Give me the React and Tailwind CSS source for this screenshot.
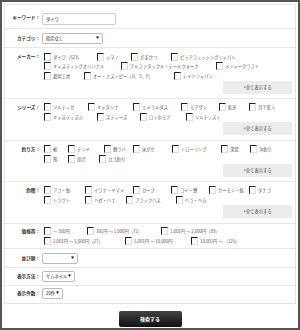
import React from "react";

const font = { fontFamily: '"Noto Sans CJK JP", "Noto Sans", sans-serif' };

const makerLines = [
  [["ダイワ（523）", "w-[53px]"], ["シマノ", "w-[34px]"], ["がまかつ", "w-[40px]"], ["ピュアフィッシングジャパン", ""]],
  [["キャスティングオリジナル", "w-[77px]"], ["アルファタックル・テールウォーク", "w-[95px]"], ["メジャークラフト", ""]],
  [["葛岡工房", "w-[40px]"], ["オー・エス・ピー（O．S．P）", "w-[90px]"], ["レイドジャパン", ""]],
];

const seriesLines = [
  [["ソルティガ", "w-[44px]"], ["キャタリナ", "w-[45px]"], ["エメラルダス", "w-[48px]"], ["モアザン", "w-[38px]"], ["紅牙", "w-[30px]"], ["月下美人", ""]],
  [["キャスティズム", "w-[53px]"], ["スティーズ", "w-[43px]"], ["ロッホモア", "w-[46px]"], ["ソルティスト", ""]],
];

const methodLines = [
  [["船", "w-[24px]"], ["テンヤ", "w-[36px]"], ["鯛ラバ", "w-[29px]"], ["泳がせ", "w-[39px]"], ["トローリング", "w-[49px]"], ["深場", "w-[29px]"], ["沖釣り", ""]],
  [["筏", "w-[24px]"], ["投げ", "w-[31px]"], ["カゴ釣り", ""]],
];

const fishLines = [
  [["アユ・鮎", "w-[41px]"], ["イワナ・ヤマメ", "w-[48px]"], ["カープ", "w-[38px]"], ["コイ・鯉", "w-[38px]"], ["サーモン・鮭", "w-[40px]"], ["タナゴ", ""]],
  [["トラウト", "w-[41px]"], ["ハゼ・ハエ", "w-[41px]"], ["ブラックバス", "w-[50px]"], ["ヘラ・へら", ""]],
];

const priceLines = [
  [["～ 300円", "w-[43px]"], ["301円 ～ 1,000円（72）", "w-[74px]"], ["1,001円 ～ 2,000円（89）", ""]],
  [["2,001円 ～ 5,000円（27）", "w-[81px]"], ["5,001円 ～ 10,000円", "w-[66px]"], ["10,001円 ～ （125）", ""]],
];

function Check({ label, w }) {
  return (
    <div className={`flex items-center shrink-0 ${w}`}>
      <span className="w-[7px] h-[8px] shrink-0 bg-white border-t border-l border-r border-b border-t-[#222] border-l-[#222] border-r-[#ddd] border-b-[#ddd]" />
      <span className="ml-[2px] whitespace-nowrap text-[#555]">{label}</span>
    </div>
  );
}

function Lines({ lines }) {
  return (
    <div className="pl-[2px]">
      {lines.map((line, i) => (
        <div key={i} className="flex items-center h-[9.5px]">
          {line.map(([label, w]) => (
            <Check key={label} label={label} w={w} />
          ))}
        </div>
      ))}
    </div>
  );
}

function MoreButton() {
  return (
    <div className="flex justify-end">
      <div className="w-[69px] h-[13px] bg-[#ececec] flex items-center justify-center text-[#444]">
        +全て表示する
      </div>
    </div>
  );
}

function Select({ text, w }) {
  return (
    <div className={`h-[11px] border border-[#bbb] rounded-[2px] bg-white flex items-center justify-between px-[3px] ${w}`}>
      <span className="text-[#222] whitespace-nowrap">{text}</span>
      <span className="text-[3px] text-black">▼</span>
    </div>
  );
}

function Row({ label, pad, labelH, children }) {
  return (
    <div className={`flex border-b border-[#e8e8e8] ${pad}`}>
      <div className={`w-[37px] shrink-0 pr-[2px] flex items-center justify-end font-bold text-[4.6px] text-[#333] whitespace-nowrap ${labelH}`}>
        {label}
      </div>
      <div className="flex-1 pr-[3px]">{children}</div>
    </div>
  );
}

export default function App() {
  return (
    <div
      className="w-[300px] h-[330px] border-2 border-[#555] bg-white p-[2px] text-[4.3px] leading-none"
      style={font}
    >
      <div className="border border-[#e3e3e3]">
        <Row label="キーワード：" pad="pt-[8px] pb-[3px]" labelH="h-[8px]">
          <div className="w-[74px] h-[12px] border border-[#ccc] rounded-[2px] flex items-center px-[3px] text-[#222]">
            ダイワ
          </div>
        </Row>
        <Row label="カテゴリ：" pad="pt-[4px] pb-[3px]" labelH="h-[11px]">
          <Select text="指定なし" w="w-[61px]" />
        </Row>
        <Row label="メーカー：" pad="pt-[4px] pb-[4px]" labelH="h-[9.5px]">
          <Lines lines={makerLines} />
          <MoreButton />
        </Row>
        <Row label="シリーズ：" pad="pt-[4px] pb-[5px]" labelH="h-[9.5px]">
          <Lines lines={seriesLines} />
          <MoreButton />
        </Row>
        <Row label="釣り方：" pad="pt-[4px] pb-[4px]" labelH="h-[9.5px]">
          <Lines lines={methodLines} />
          <MoreButton />
        </Row>
        <Row label="釣種：" pad="pt-[4px] pb-[5px]" labelH="h-[9.5px]">
          <Lines lines={fishLines} />
          <MoreButton />
        </Row>
        <Row label="価格帯：" pad="pt-[3px] pb-[2px]" labelH="h-[9.5px]">
          <Lines lines={priceLines} />
        </Row>
        <Row label="並び順：" pad="pt-[4px] pb-[3px]" labelH="h-[11px]">
          <Select text="" w="w-[36px]" />
        </Row>
        <Row label="表示方法：" pad="pt-[3px] pb-[3px]" labelH="h-[11px]">
          <Select text="サムネイル" w="w-[33px]" />
        </Row>
        <div className="flex pt-[2px] pb-[4px]">
          <div className="w-[37px] shrink-0 pr-[2px] h-[11px] flex items-center justify-end font-bold text-[4.6px] text-[#333]">
            表示件数：
          </div>
          <Select text="20件" w="w-[21px]" />
        </div>
      </div>
      <div className="flex justify-center mt-[7px]">
        <div className="w-[63px] h-[16px] rounded-[2px] bg-gradient-to-b from-[#444] to-[#111] text-white font-bold text-[5px] flex items-center justify-center">
          検索する
        </div>
      </div>
    </div>
  );
}
